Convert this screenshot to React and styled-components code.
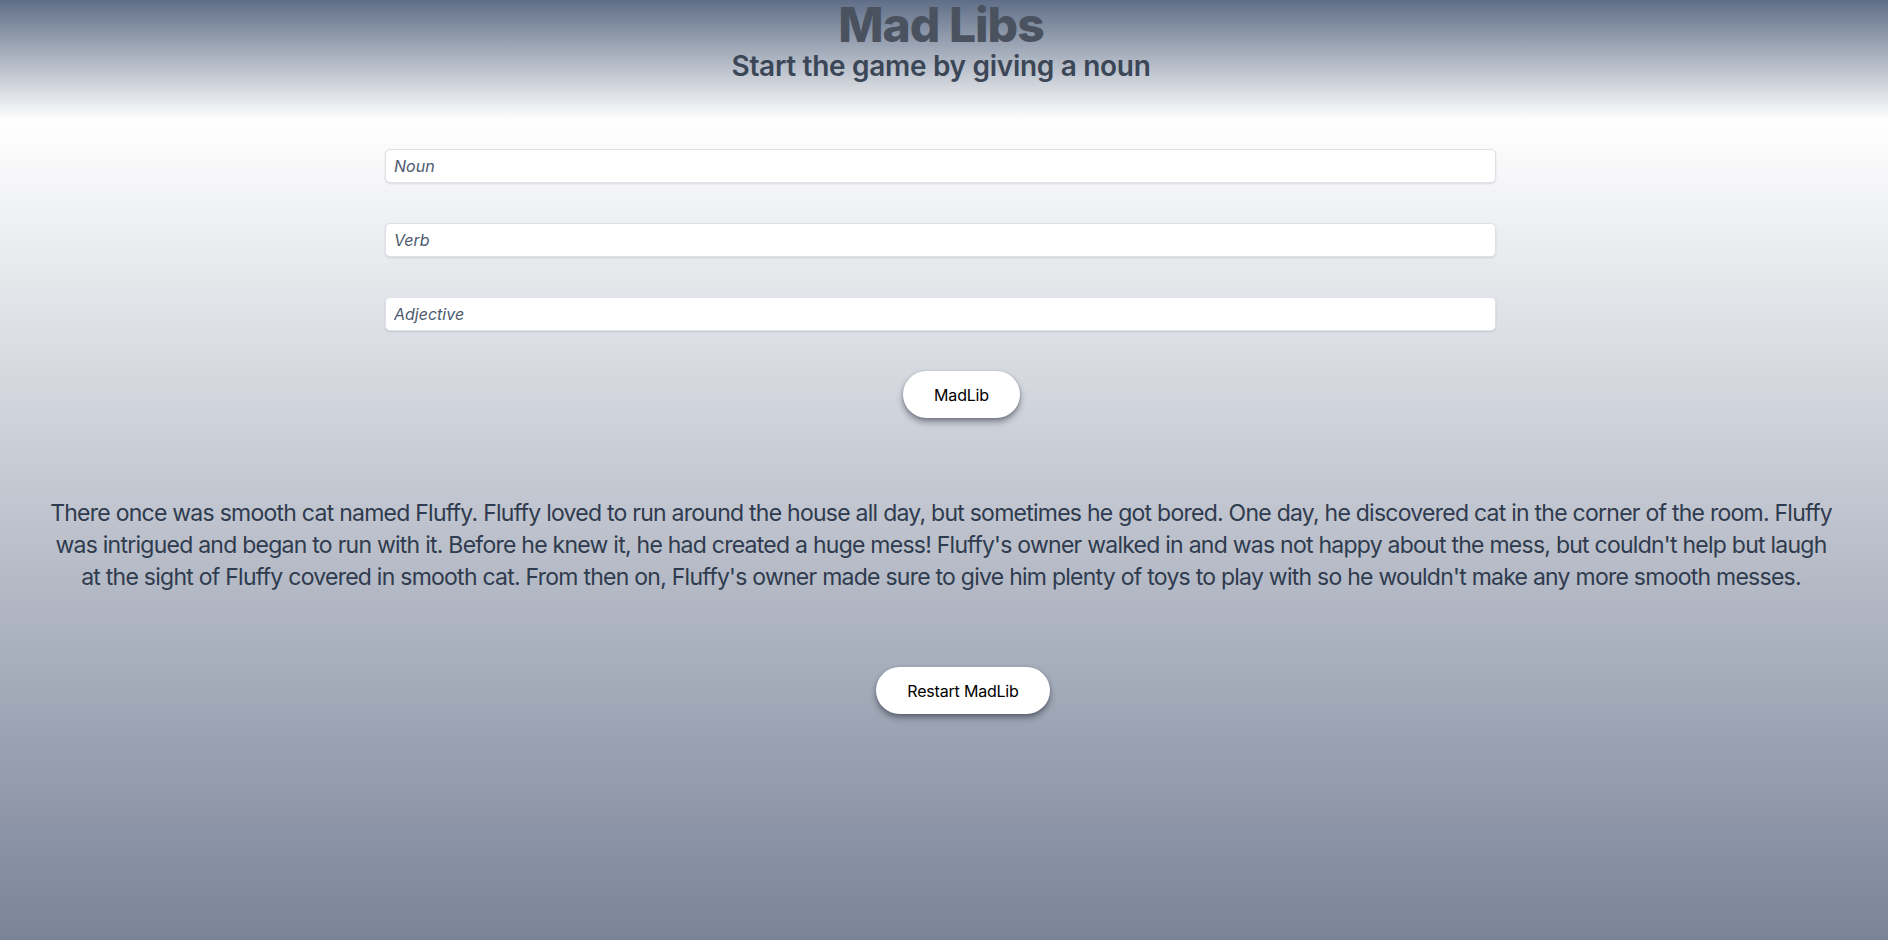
import React, { useState } from "react";
import styled, { createGlobalStyle } from "styled-components";

const Global = createGlobalStyle`
  html, body { margin: 0; padding: 0; }
  body { font-family: Inter, "Noto Sans", "Liberation Sans", sans-serif; }
  * { box-sizing: border-box; }
`;

const Page = styled.div`
  min-height: 940px;
  background: linear-gradient(to bottom, #ffffff 120px, #7a8499 940px);
  display: flex;
  flex-direction: column;
`;

const Header = styled.header`
  height: 120px;
  background: linear-gradient(to bottom, #5f6e87 0%, #ffffff 100%);
  text-align: center;
  padding-right: 6px;
`;

const Title = styled.h1`
  margin: 0;
  padding-top: 1px;
  font-size: 48px;
  line-height: 47px;
  font-weight: 800;
  letter-spacing: -1px;
  color: #4a5260;
`;

const Subtitle = styled.h2`
  margin: 0;
  font-size: 28px;
  line-height: 36px;
  font-weight: 600;
  letter-spacing: -0.3px;
  color: #3b4657;
`;

const Form = styled.form`
  display: flex;
  flex-direction: column;
  align-items: center;
  padding-top: 29px;
`;

const Fields = styled.div`
  width: 1111px;
  margin-right: 7px;
  display: flex;
  flex-direction: column;
  gap: 40px;
`;

const Input = styled.input`
  height: 34px;
  width: 100%;
  border: 1px solid #dde1e8;
  border-radius: 5px;
  background: #ffffff;
  box-shadow: 0 1px 2px rgba(15, 23, 42, 0.12);
  padding: 0 8px;
  font-family: inherit;
  font-size: 16px;
  color: #1f2937;
  outline: none;
  &::placeholder {
    font-style: italic;
    color: #4d5a70;
  }
`;

const Button = styled.button`
  height: 47px;
  padding: 0 31px;
  border: none;
  border-radius: 9999px;
  background: #ffffff;
  color: #000000;
  font-family: inherit;
  font-size: 16px;
  font-weight: 400;
  letter-spacing: -0.2px;
  box-shadow: 0 4px 6px rgba(30, 35, 50, 0.45), 0 1px 3px rgba(30, 35, 50, 0.2);
  cursor: pointer;
  margin-left: ${(p) => p.$shift}px;
  margin-top: ${(p) => p.$top}px;
`;

const Story = styled.p`
  margin: 79px 0 0;
  padding: 0 52px 0 46px;
  text-align: center;
  font-size: 23px;
  line-height: 32px;
  letter-spacing: -0.75px;
  color: #2f3b4e;
`;

const Actions = styled.div`
  display: flex;
  justify-content: center;
`;

export default function App() {
  const [noun, setNoun] = useState("");
  const [verb, setVerb] = useState("");
  const [adj, setAdj] = useState("");
  return (
    <>
      <Global />
      <Page>
        <Header>
          <Title>Mad Libs</Title>
          <Subtitle>Start the game by giving a noun</Subtitle>
        </Header>
        <Form onSubmit={(e) => e.preventDefault()}>
          <Fields>
            <Input placeholder="Noun" value={noun} onChange={(e) => setNoun(e.target.value)} />
            <Input placeholder="Verb" value={verb} onChange={(e) => setVerb(e.target.value)} />
            <Input placeholder="Adjective" value={adj} onChange={(e) => setAdj(e.target.value)} />
          </Fields>
          <Button type="submit" $top={40} $shift={35}>MadLib</Button>
        </Form>
        <Story>
          There once was smooth cat named Fluffy. Fluffy loved to run around the house all day, but sometimes he got bored. One day, he discovered cat in the corner of the room. Fluffy was intrigued and began to run with it. Before he knew it, he had created a huge mess! Fluffy's owner walked in and was not happy about the mess, but couldn't help but laugh at the sight of Fluffy covered in smooth cat. From then on, Fluffy's owner made sure to give him plenty of toys to play with so he wouldn't make any more smooth messes.
        </Story>
        <Actions>
          <Button type="button" $top={74} $shift={38}>Restart MadLib</Button>
        </Actions>
      </Page>
    </>
  );
}
